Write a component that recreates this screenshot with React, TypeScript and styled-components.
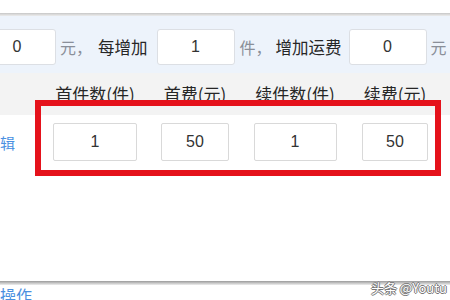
import React from "react";
import styled, { createGlobalStyle } from "styled-components";

const Global = createGlobalStyle`
  html, body { margin: 0; padding: 0; background: #fff; }
  body { font-family: "Liberation Sans", "Noto Sans CJK SC", sans-serif; overflow: hidden; }
`;

const Page = styled.div`
  position: relative;
  width: 450px;
  height: 300px;
  overflow: hidden;
  background: #fff;
`;

const TopGap = styled.div`
  height: 13px;
  background: #fff;
`;

const Shade = styled.div<{ $dark?: boolean }>`
  height: ${(p) => (p.$dark ? "4px" : "3px")};
  background: ${(p) =>
    p.$dark
      ? "linear-gradient(#9a9a9a, #c4c4c4 50%, #eeeeee)"
      : "linear-gradient(#c6c6c6, #dedede 60%, #ececec)"};
`;

const FilterBar = styled.div`
  display: flex;
  align-items: center;
  height: 57px;
  box-sizing: border-box;
  padding: 5px 0 0;
  margin-left: -22px;
  background: #edf3fb;
  white-space: nowrap;
`;

const BarInput = styled.input<{ $gap?: number }>`
  box-sizing: border-box;
  width: 78px;
  height: 36px;
  margin-left: ${(p) => p.$gap ?? 0}px;
  border: 1px solid #dcdfe4;
  border-radius: 3px;
  background: #fff;
  text-align: center;
  font-family: "Liberation Sans", "Noto Sans CJK SC", sans-serif;
  font-size: 16px;
  color: #333;
  padding: 0;
  outline: none;
`;

const Unit = styled.span<{ $gap: number }>`
  margin-left: ${(p) => p.$gap}px;
  font-family: "Noto Sans CJK SC", sans-serif;
  font-size: 16px;
  color: #8a8f99;
`;

const Label = styled.span<{ $gap: number }>`
  margin-left: ${(p) => p.$gap}px;
  font-family: "Noto Sans CJK SC", sans-serif;
  font-size: 16.5px;
  color: #262626;
`;

const TableSection = styled.div`
  height: 208px;
  background: #fff;
`;

const Row = styled.div<{ $head?: boolean }>`
  display: grid;
  grid-template-columns: 90px repeat(4, 100px);
  margin-left: -45px;
  align-items: center;
  height: ${(p) => (p.$head ? "42px" : "54px")};
  background: ${(p) => (p.$head ? "#f3f3f3" : "#fff")};
`;

const HeadCell = styled.div`
  text-align: center;
  font-family: "Noto Sans CJK SC", sans-serif;
  font-size: 17px;
  color: #262626;
  white-space: nowrap;
  padding-bottom: 1px;
`;

const Cell = styled.div`
  display: flex;
  justify-content: center;
  align-items: center;
`;

const ActionLink = styled.a`
  font-family: "Noto Sans CJK SC", sans-serif;
  font-size: 15px;
  color: #4a90e2;
  text-decoration: none;
`;

const CellInput = styled.input<{ $w: number }>`
  box-sizing: border-box;
  width: ${(p) => p.$w}px;
  height: 38px;
  border: 1px solid #d9d9d9;
  border-radius: 2px;
  background: #fff;
  text-align: center;
  font-family: "Liberation Sans", sans-serif;
  font-size: 16px;
  color: #333;
  padding: 0;
  outline: none;
`;

const Footer = styled.div`
  height: 15px;
  line-height: 20px;
  font-family: "Noto Sans CJK SC", sans-serif;
  font-size: 16px;
  color: #4a8fdf;
  white-space: nowrap;
`;

const Highlight = styled.div`
  position: absolute;
  left: 35px;
  top: 100px;
  width: 406px;
  height: 76px;
  box-sizing: border-box;
  border: 6px solid #e5121b;
  pointer-events: none;
`;

const Watermark = styled.div`
  position: absolute;
  right: 3px;
  top: 278px;
  font-family: "Noto Sans CJK SC", sans-serif;
  font-size: 13px;
  color: #fff;
  white-space: nowrap;
  text-shadow: 1px 0 #777, -1px 0 #777, 0 1px #777, 0 -1px #777;
`;

const columns = [
  { title: "首件数(件)", value: "1", w: 84 },
  { title: "首费(元)", value: "50", w: 68 },
  { title: "续件数(件)", value: "1", w: 83 },
  { title: "续费(元)", value: "50", w: 66 },
];

export default function App() {
  return (
    <>
      <Global />
      <Page>
        <TopGap />
        <Shade />
        <FilterBar>
          <BarInput defaultValue="0" />
          <Unit $gap={4}>元，</Unit>
          <Label $gap={6}>每增加</Label>
          <BarInput $gap={9} defaultValue="1" />
          <Unit $gap={5}>件，</Unit>
          <Label $gap={4}>增加运费</Label>
          <BarInput $gap={7} defaultValue="0" />
          <Unit $gap={4}>元</Unit>
        </FilterBar>
        <TableSection>
          <Row $head>
            <HeadCell />
            {columns.map((c) => (
              <HeadCell key={c.title}>{c.title}</HeadCell>
            ))}
          </Row>
          <Row>
            <Cell>
              <ActionLink>编辑</ActionLink>
            </Cell>
            {columns.map((c) => (
              <Cell key={c.title}>
                <CellInput $w={c.w} defaultValue={c.value} />
              </Cell>
            ))}
          </Row>
        </TableSection>
        <Shade $dark />
        <Footer>操作</Footer>
        <Highlight />
        <Watermark>头条 @Youtu</Watermark>
      </Page>
    </>
  );
}
